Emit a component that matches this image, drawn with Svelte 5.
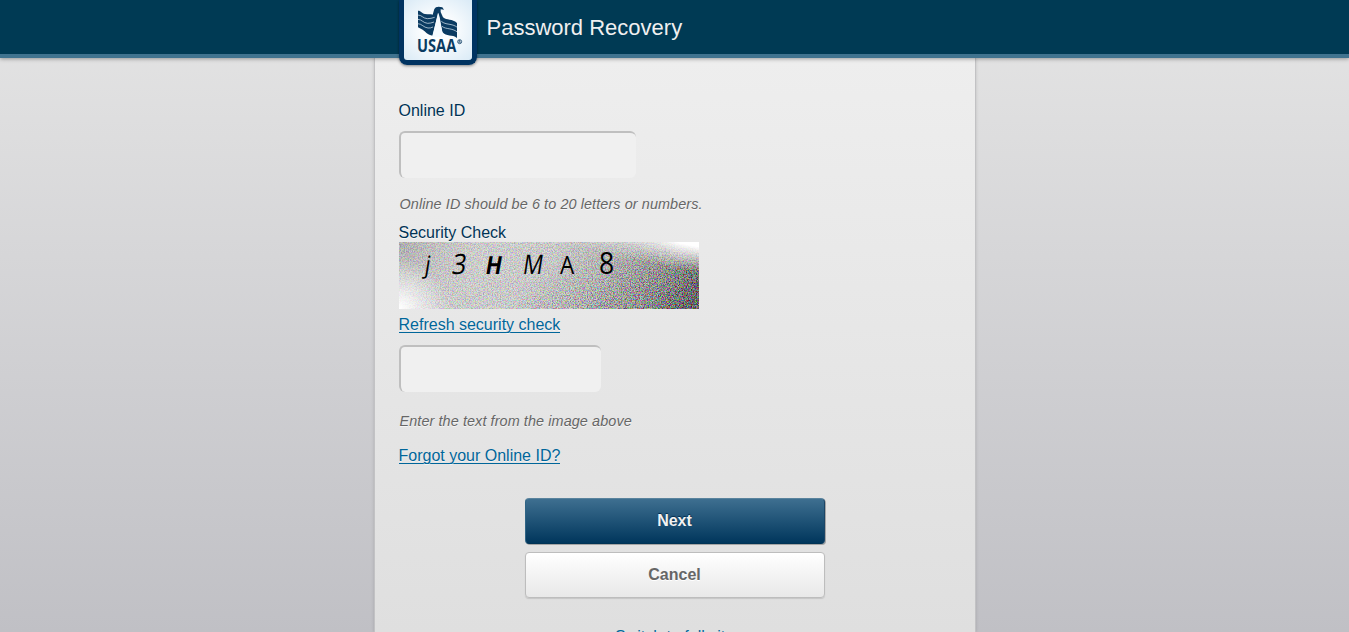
<script>
  let onlineId = $state('');
  let answer = $state('');
  const glyphs = [
    { c: 'j', x: 25, y: 31, size: 24, slant: -9, w: 500, sx: 0.9 },
    { c: '3', x: 52, y: 32, size: 28, slant: -9, w: 400, sx: 0.88 },
    { c: 'H', x: 85.5, y: 32, size: 25, slant: -10, w: 700, sx: 0.85 },
    { c: 'M', x: 123, y: 32, size: 27, slant: -9, w: 500, sx: 0.82 },
    { c: 'A', x: 161, y: 32, size: 25, slant: 0, w: 500, sx: 0.9 },
    { c: '8', x: 200, y: 32, size: 31, slant: 0, w: 500, sx: 0.86 }
  ];
</script>

<div class="page">
  <header>
    <div class="bar">
      <div class="logo">
        <svg viewBox="42 0 204 180" width="68" height="60" aria-label="USAA">
          <g fill="#0b3b62">
            <path d="M84 32 C94 32 95 40 105 42 C115 43 122 42 128 44 L133 27 Q136 20 146 20 L157 22 L162 29 L152 28 L152 36 L159 52 C170 62 187 56 201 69 L201 114 C187 102 169 111 157 96 L144 38 L128 107 C113 105 106 94 98 89 L84 82 Z" />
          </g>
          <path d="M145 38 L126 112 L160 112 L149 52 Z" fill="#f5faff" />
          <g fill="none" stroke="#eaf4fc" stroke-width="2">
            <path d="M83 45 C96 45 98 55 112 56 Q123 56 134 52" />
            <path d="M83 58 C96 58 99 69 113 70 Q122 70 132 66" />
            <path d="M83 71 C96 71 101 83 114 84 Q121 85 129 81" />
            <path d="M154 64 C168 76 185 69 202 82" />
            <path d="M156 79 C169 89 185 83 202 96" />
          </g>
          <text class="brand" transform="translate(81 155) scale(.86 1)">USAA</text>
          <circle cx="209" cy="125" r="6" fill="none" stroke="#0b3b62" stroke-width="2.4" />
          <path d="M207 129 V121.500 H210 Q212 123.500 210 125.500 H207 M209.500 125.500 L211.500 129" fill="none" stroke="#0b3b62" stroke-width="1.7" />
        </svg>
      </div>
      <h1>Password Recovery</h1>
    </div>
  </header>

  <main>
    <label class="id" for="online-id">Online ID</label>
    <input id="online-id" class="field wide" bind:value={onlineId} />
    <p class="hint first">Online ID should be 6 to 20 letters or numbers.</p>
    <label class="check" for="answer">Security Check</label>
    <svg class="captcha" width="300" height="67" viewBox="0 0 300 67">
      <defs>
        <linearGradient id="base" x1="70" y1="-40" x2="260" y2="100" gradientUnits="userSpaceOnUse">
          <stop offset="0" stop-color="#d9d9d9" />
          <stop offset=".4" stop-color="#d6d6d6" />
          <stop offset=".65" stop-color="#b8b8b8" />
          <stop offset=".85" stop-color="#858585" />
          <stop offset="1" stop-color="#383838" />
        </linearGradient>
        <radialGradient id="shadeLeft" cx="0" cy="0" r="80" gradientUnits="userSpaceOnUse">
          <stop offset="0" stop-color="#888" stop-opacity=".45" />
          <stop offset="1" stop-color="#aaa" stop-opacity="0" />
        </radialGradient>
        <radialGradient id="glowLeft" cx="0" cy="67" r="50" gradientUnits="userSpaceOnUse">
          <stop offset="0" stop-color="#fff" />
          <stop offset="1" stop-color="#fff" stop-opacity="0" />
        </radialGradient>
        <linearGradient id="glowRight" x1="275" y1="0" x2="270" y2="26" gradientUnits="userSpaceOnUse">
          <stop offset="0" stop-color="#fff" />
          <stop offset="1" stop-color="#fff" stop-opacity="0" />
        </linearGradient>
        <linearGradient id="fadeRight" x1="130" y1="0" x2="280" y2="0" gradientUnits="userSpaceOnUse">
          <stop offset="0" stop-color="#000" />
          <stop offset="1" stop-color="#fff" />
        </linearGradient>
        <mask id="rightMask"><rect width="300" height="67" fill="url(#fadeRight)" /></mask>
        <linearGradient id="strength" x1="120" y1="-20" x2="190" y2="100" gradientUnits="userSpaceOnUse">
          <stop offset="0" stop-color="#646464" />
          <stop offset=".45" stop-color="#747474" />
          <stop offset="1" stop-color="#fff" />
        </linearGradient>
        <mask id="noiseMask">
          <rect width="300" height="67" fill="url(#strength)" />
        </mask>
        <filter id="noise" x="0" y="0" width="100%" height="100%" color-interpolation-filters="sRGB">
          <feTurbulence type="fractalNoise" baseFrequency="0.77" numOctaves="3" seed="7" />
          <feColorMatrix values="4 0 0 0 -1.35  0 4 0 0 -1.35  0 0 4 0 -1.35  0 0 0 0 .5" />
        </filter>
      </defs>
      <rect width="300" height="67" fill="url(#base)" />
      <rect width="300" height="67" fill="url(#shadeLeft)" />
      <g mask="url(#noiseMask)"><rect width="300" height="67" filter="url(#noise)" /></g>
      <rect width="300" height="67" fill="url(#glowLeft)" />
      <rect width="300" height="67" fill="url(#glowRight)" mask="url(#rightMask)" />
      {#each glyphs as g}
        <text font-size={g.size} font-weight={g.w} transform={`translate(${g.x} ${g.y}) skewX(${g.slant}) scale(${g.sx} 1)`}>{g.c}</text>
      {/each}
    </svg>
    <a class="refresh" href="#refresh">Refresh security check</a>
    <input id="answer" class="field narrow" bind:value={answer} />
    <p class="hint second">Enter the text from the image above</p>
    <a class="forgot" href="#forgot">Forgot your Online ID?</a>
    <div class="actions">
      <button class="next">Next</button>
      <button class="cancel">Cancel</button>
      <a class="switch" href="#full">Switch to full site</a>
    </div>
  </main>
</div>

<style>
  :global(body) { overflow: hidden; }
  .page {
    height: 632px;
    overflow: hidden;
    font: 16px/20px "Liberation Sans", Arial, sans-serif;
    color: #003355;
    background: linear-gradient(#e5e5e5, #c0c0c5);
  }
  header {
    position: relative;
    z-index: 1;
    height: 54px;
    background: #003a54;
    border-bottom: 4px solid #40738f;
    box-shadow: 0 1px 4px rgba(0, 0, 0, .35);
  }
  .bar { width: 552px; margin-left: calc(50% - 275.5px); display: flex; align-items: flex-start; }
  .logo {
    box-sizing: border-box;
    flex: none;
    width: 78px;
    height: 65px;
    border: 5px solid #003361;
    border-top: 0;
    border-radius: 0 0 8px 8px;
    background: radial-gradient(ellipse at center, #fff 25%, #d9eaf6);
    box-shadow: 0 1px 3px rgba(0, 0, 0, .45);
  }
  .logo svg { display: block; }
  .brand { font: 700 51px "Open Sans", sans-serif; fill: #0b3b62; }
  h1 { margin: 0 0 0 9.5px; font-size: 22px; line-height: 56px; font-weight: 400; color: #f0f0f0; }
  main {
    box-sizing: border-box;
    display: flex;
    flex-direction: column;
    align-items: flex-start;
    width: 602px;
    height: 574px;
    margin: 0 auto;
    padding: 43px 24px 0;
    border: solid #c2c2c4;
    border-width: 0 1px;
    background: linear-gradient(#eee, #dfdfdf);
    box-shadow: 0 0 3px rgba(0, 0, 0, .15);
    text-shadow: 0 1px 0 rgba(255, 255, 255, .65);
  }
  .id { height: 20px; }
  .field {
    box-sizing: border-box;
    flex: none;
    height: 47px;
    padding: 0 10px;
    border: 2px solid #bfbfbf;
    border-width: 2px 0 0 2px;
    border-radius: 6px;
    background: #f0f0f0;
    font: inherit;
    outline: 0;
  }
  .wide { width: 237px; margin-top: 10px; }
  .narrow { width: 202px; margin-top: 12px; }
  .hint { margin: 0 0 0 1px; font-size: 14.4px; letter-spacing: .1px; font-style: italic; color: #666; }
  .first { margin-top: 16px; }
  .check { height: 19px; margin-top: 9px; }
  .captcha { display: block; flex: none; }
  .captcha text { font-family: "Open Sans", sans-serif; fill: #000; text-shadow: none; }
  a { color: #00669a; text-decoration: none; }
  .refresh, .forgot { height: 17px; line-height: 19px; border-bottom: 1px solid #00669a; }
  .refresh { margin-top: 6px; }
  .second { margin-top: 19px; }
  .forgot { margin-top: 15px; }
  .actions { align-self: center; display: flex; flex-direction: column; width: 300px; margin-top: 34px; }
  button { box-sizing: border-box; flex: none; height: 46px; border-radius: 4px; font: bold 16px/20px "Liberation Sans", Arial, sans-serif; padding: 0 0 1px; }
  .next {
    color: #f2f2f2;
    border: 1px solid;
    border-color: #5a839d #1b4566 #003355 #2f6485;
    background: linear-gradient(#3e6f90, #00365c);
    box-shadow: 1px 1px 0 #a5a5a5;
    text-shadow: 0 -1px 1px #002b4c;
  }
  .cancel {
    margin-top: 8px;
    color: #666;
    border: 1px solid #bdbdbd;
    background: linear-gradient(#fff, #e8e8e8);
    box-shadow: 0 1px 1px rgba(0, 0, 0, .12);
    text-shadow: 0 1px 0 #fff;
  }
  .switch { align-self: center; margin-top: 29px; line-height: 20px; }
</style>
